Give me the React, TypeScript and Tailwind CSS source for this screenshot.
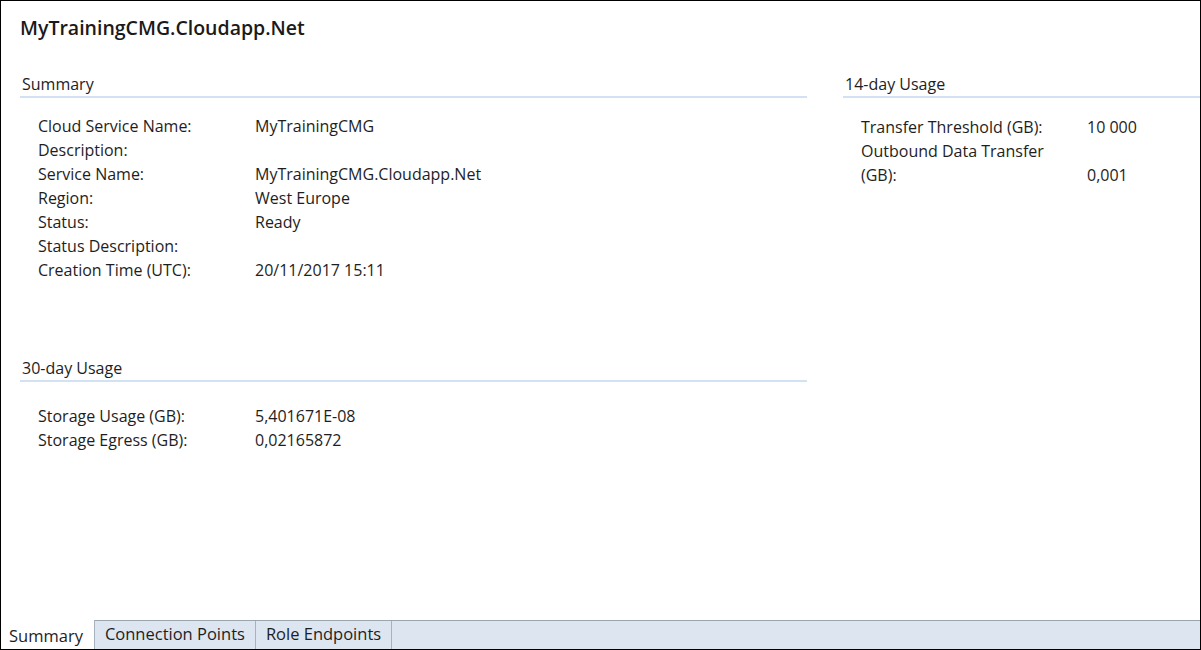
import React from "react";

type Row = { label: string; value?: string };

const summaryRows: Row[] = [
  { label: "Cloud Service Name:", value: "MyTrainingCMG" },
  { label: "Description:" },
  { label: "Service Name:", value: "MyTrainingCMG.Cloudapp.Net" },
  { label: "Region:", value: "West Europe" },
  { label: "Status:", value: "Ready" },
  { label: "Status Description:" },
  { label: "Creation Time (UTC):", value: "20/11/2017 15:11" },
];

const monthRows: Row[] = [
  { label: "Storage Usage (GB):", value: "5,401671E-08" },
  { label: "Storage Egress (GB):", value: "0,02165872" },
];

const twoWeekRows: Row[] = [
  { label: "Transfer Threshold (GB):", value: "10 000" },
  { label: "Outbound Data Transfer (GB):", value: "0,001" },
];

function SectionHeader({ title }: { title: string }) {
  return (
    <div className="border-b-2 border-[#d3e2f2] pl-[2px] pb-[1px] pt-[1px] leading-[22px]">
      {title}
    </div>
  );
}

function Fields({ rows, labelWidth, top }: { rows: Row[]; labelWidth: string; top: string }) {
  return (
    <div className={`pl-[18px] flex flex-col ${top}`}>
      {rows.map((r) => (
        <div key={r.label} className="flex items-end leading-[24px]">
          <div className={labelWidth}>{r.label}</div>
          <div>{r.value}</div>
        </div>
      ))}
    </div>
  );
}

export default function App() {
  return (
    <div
      className="w-[1201px] h-[650px] border border-black bg-white flex flex-col text-[16px] text-[#1e1e1e]"
      style={{ fontFamily: '"Segoe UI", "Open Sans", "Noto Sans", sans-serif' }}
    >
      <div className="flex-1 flex flex-col">
        {/* Title */}
        <div className="pl-[19px] pt-[13px] text-[19.5px] font-semibold text-[#1a1a1a] leading-[28px]">
          MyTrainingCMG.Cloudapp.Net
        </div>

        <div className="flex pl-[19px] pt-[30px]">
          {/* Left column */}
          <div className="w-[787px] flex flex-col">
            <SectionHeader title="Summary" />
            <Fields rows={summaryRows} labelWidth="w-[217px] shrink-0" top="pt-[16px]" />

            <div className="mt-[74px]">
              <SectionHeader title="30-day Usage" />
              <Fields rows={monthRows} labelWidth="w-[217px] shrink-0" top="pt-[22px]" />
            </div>
          </div>

          {/* Right column */}
          <div className="flex-1 ml-[36px] flex flex-col">
            <SectionHeader title="14-day Usage" />
            <Fields rows={twoWeekRows} labelWidth="w-[226px] shrink-0 pr-[16px]" top="pt-[17px]" />
          </div>
        </div>
      </div>

      {/* Tab strip */}
      <div className="h-[29px] bg-[#dde6f0] border-t border-[#9ba5b0] flex items-stretch text-[16.5px]">
        <div className="-mt-px bg-white border-r border-[#a9b2bc] pl-[8px] pr-[11px] pt-[4px] leading-[24px]">
          Summary
        </div>
        <div className="border-r border-[#a9b2bc] px-[10px] pt-[1px] leading-[24px]">
          Connection Points
        </div>
        <div className="border-r border-[#a9b2bc] px-[10px] pt-[1px] leading-[24px]">
          Role Endpoints
        </div>
      </div>
    </div>
  );
}
